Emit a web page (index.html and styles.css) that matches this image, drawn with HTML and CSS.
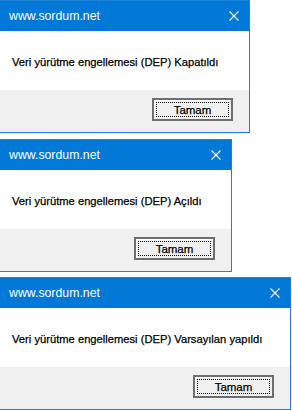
FILE: index.html
```html
<!DOCTYPE html>
<html lang="tr">

<head>
    <meta charset="UTF-8" />
    <title>DEP Mesajları</title>
    <link rel="stylesheet" href="styles.css">
</head>

<body>

    <!-- Kapatıldı -->
    <div class="dialog dialog-wide">
        <div class="titlebar">
            <span class="title">www.sordum.net</span>
            <svg class="close" width="10" height="10" viewBox="0 0 10 10">
                <path d="M0.5 0.5 L9.5 9.5 M9.5 0.5 L0.5 9.5" stroke="#fff" stroke-width="1.1" />
            </svg>
        </div>
        <div class="message">Veri yürütme engellemesi (DEP) Kapatıldı</div>
        <div class="footer">
            <button class="ok-button"><span>Tamam</span></button>
        </div>
    </div>

    <!-- Açıldı -->
    <div class="dialog dialog-narrow">
        <div class="titlebar">
            <span class="title">www.sordum.net</span>
            <svg class="close" width="10" height="10" viewBox="0 0 10 10">
                <path d="M0.5 0.5 L9.5 9.5 M9.5 0.5 L0.5 9.5" stroke="#fff" stroke-width="1.1" />
            </svg>
        </div>
        <div class="message">Veri yürütme engellemesi (DEP) Açıldı</div>
        <div class="footer">
            <button class="ok-button"><span>Tamam</span></button>
        </div>
    </div>

    <!-- Varsayılan -->
    <div class="dialog dialog-full">
        <div class="titlebar">
            <span class="title">www.sordum.net</span>
            <svg class="close" width="10" height="10" viewBox="0 0 10 10">
                <path d="M0.5 0.5 L9.5 9.5 M9.5 0.5 L0.5 9.5" stroke="#fff" stroke-width="1.1" />
            </svg>
        </div>
        <div class="message">Veri yürütme engellemesi (DEP) Varsayılan yapıldı</div>
        <div class="footer">
            <button class="ok-button"><span>Tamam</span></button>
        </div>
    </div>

</body>

</html>
```

FILE: styles.css
```css
body {
    margin: 0;
    background: #fff;
    font-family: "Liberation Sans", Arial, sans-serif;
}

/* Pencere */
.dialog {
    box-sizing: border-box;
    margin-left: -1px;
    border: 1px solid #1883d7;
    display: flex;
    flex-direction: column;
}

.dialog-wide {
    width: 251px;
    margin-bottom: 6px;
}

.dialog-narrow {
    width: 233px;
    margin-bottom: 5px;
}

.dialog-full {
    width: 292px;
}

/* Başlık çubuğu */
.titlebar {
    height: 30px;
    background: #0078d7;
    display: flex;
    align-items: center;
    justify-content: space-between;
    padding: 0 10px 0 9px;
}

.title {
    color: #fff;
    font-size: 12.3px;
}

/* Mesaj alanı */
.message {
    height: 59px;
    background: #fff;
    display: flex;
    align-items: center;
    padding: 2px 0 0 12px;
    box-sizing: border-box;
    font-size: 11.2px;
    color: #000;
    -webkit-text-stroke: 0.25px #000;
}

/* Alt kısım */
.footer {
    height: 42px;
    background: #f0f0f0;
    display: flex;
    justify-content: flex-end;
    align-items: flex-start;
    padding: 8px 16px 0 0;
    box-sizing: border-box;
}

.ok-button {
    width: 81px;
    height: 23px;
    padding: 2px;
    border: 2px solid #6e6e6e;
    background: #f0f0f0;
    box-shadow: inset 1px 1px #fff;
    box-sizing: border-box;
    display: flex;
    font-family: "Liberation Sans", Arial, sans-serif;
    font-size: 11.5px;
    color: #000;
    -webkit-text-stroke: 0.25px #000;
}

.ok-button span {
    flex: 1;
    border: 1px dotted #000;
    display: flex;
    align-items: center;
    justify-content: center;
}
```
